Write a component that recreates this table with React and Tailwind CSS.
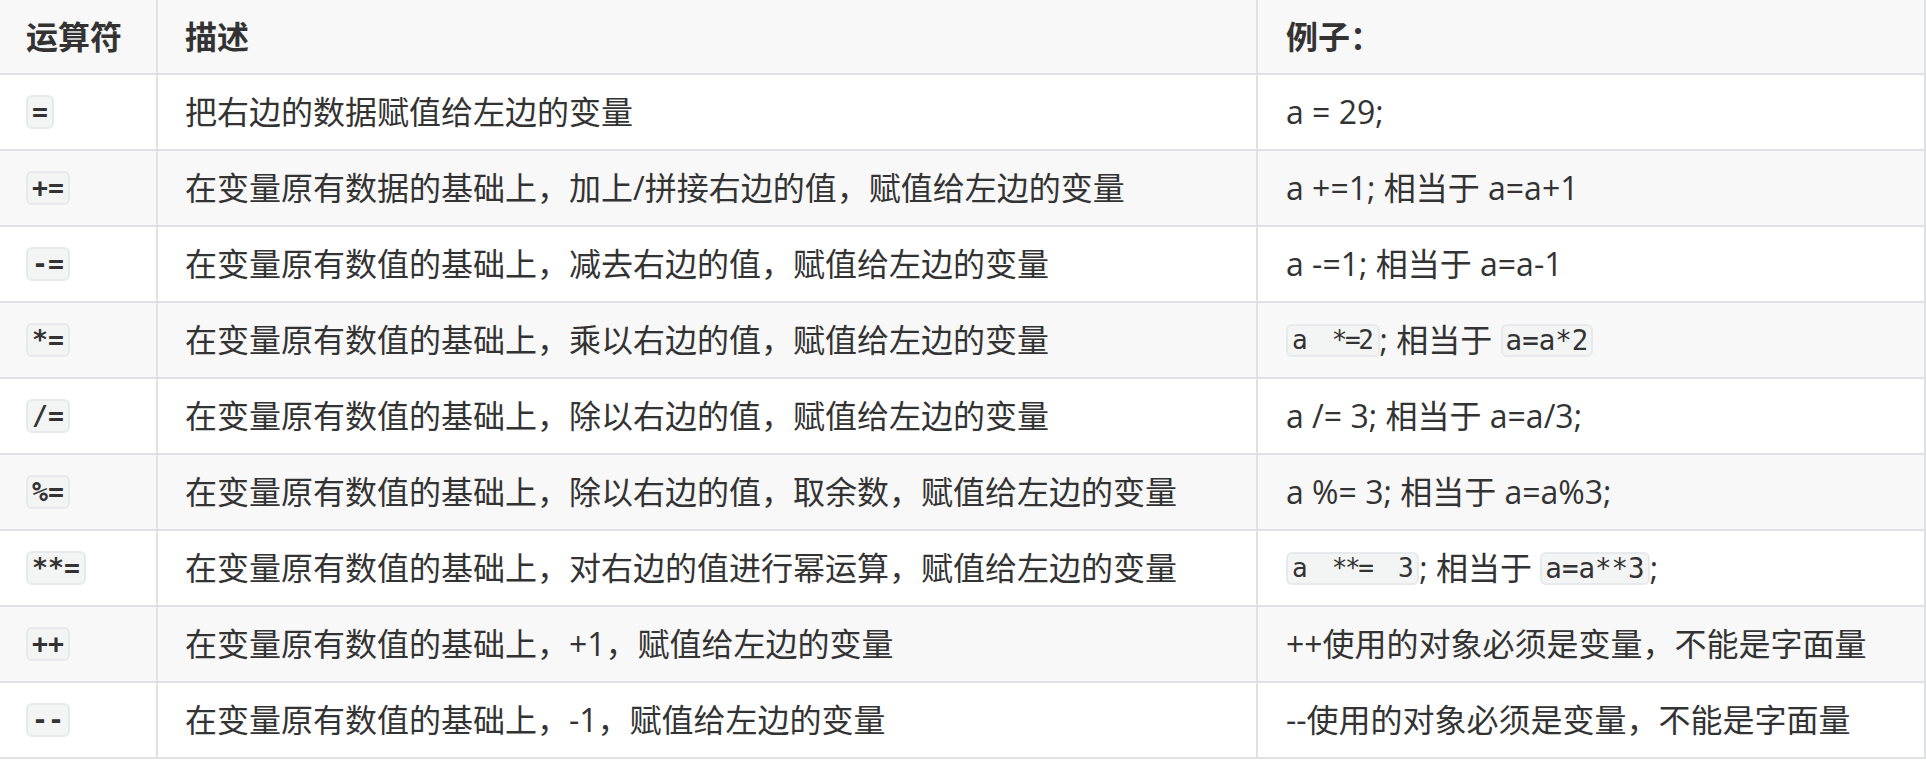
const rows = [
  { op: "=", desc: "把右边的数据赋值给左边的变量", ex: ["a = 29;"] },
  { op: "+=", desc: "在变量原有数据的基础上，加上/拼接右边的值，赋值给左边的变量", ex: ["a +=1; 相当于 a=a+1"] },
  { op: "-=", desc: "在变量原有数值的基础上，减去右边的值，赋值给左边的变量", ex: ["a -=1; 相当于 a=a-1"] },
  {
    op: "*=",
    desc: "在变量原有数值的基础上，乘以右边的值，赋值给左边的变量",
    ex: [{ code: "a  *=2" }, "; 相当于 ", { code: "a=a*2", wide: true }],
  },
  { op: "/=", desc: "在变量原有数值的基础上，除以右边的值，赋值给左边的变量", ex: ["a /= 3; 相当于 a=a/3;"] },
  { op: "%=", desc: "在变量原有数值的基础上，除以右边的值，取余数，赋值给左边的变量", ex: ["a %= 3; 相当于 a=a%3;"] },
  {
    op: "**=",
    desc: "在变量原有数值的基础上，对右边的值进行幂运算，赋值给左边的变量",
    ex: [{ code: "a  **=  3" }, "; 相当于 ", { code: "a=a**3", wide: true }, ";"],
  },
  { op: "++", desc: "在变量原有数值的基础上，+1，赋值给左边的变量", ex: ["++使用的对象必须是变量，不能是字面量"] },
  { op: "--", desc: "在变量原有数值的基础上，-1，赋值给左边的变量", ex: ["--使用的对象必须是变量，不能是字面量"] },
];

function Code({ children, wide }) {
  return (
    <code
      className={`inline-block whitespace-pre rounded-[6px] border-2 border-[#e7eaed] bg-[#f3f4f4] font-['DejaVu_Sans_Mono',monospace] leading-[29px] text-[#333] ${
        wide ? "px-[3px] text-[27.5px]" : "pl-[4px] pr-[6px] text-[26px] tracking-[-2.4px]"
      }`}
    >
      {children}
    </code>
  );
}

export default function App() {
  return (
    <div className="h-[760px] w-[1926px] overflow-hidden bg-white font-['Open_Sans','Noto_Sans_CJK_SC',sans-serif] text-[32px] text-[#333]">
      <div className="flex h-[75px] border-b-2 border-[#dfe2e5] bg-[#f8f8f8] font-bold">
        <div className="flex w-[158px] items-center border-r-2 border-[#dfe2e5] pl-[26px]">运算符</div>
        <div className="flex w-[1100px] items-center border-r-2 border-[#dfe2e5] pl-[27px]">描述</div>
        <div className="flex flex-1 items-center border-r-2 border-[#dfe2e5] pl-[28px]">例子：</div>
      </div>

      {rows.map((row, idx) => (
        <div
          key={row.op}
          className={`flex h-[76px] border-b-2 border-[#dfe2e5] ${idx % 2 === 1 ? "bg-[#f8f8f8]" : "bg-white"}`}
        >
          <div className="flex w-[158px] items-center border-r-2 border-[#dfe2e5] pl-[26px]">
            <code className="inline-block rounded-[6px] border-2 border-[#e7eaed] bg-[#f3f4f4] px-[4px] font-['DejaVu_Sans_Mono',monospace] text-[26.5px] font-bold leading-[30px]">
              {row.op}
            </code>
          </div>
          <div className="flex w-[1100px] items-center border-r-2 border-[#dfe2e5] pl-[27px] whitespace-nowrap">
            {row.desc}
          </div>
          <div className="flex flex-1 items-center border-r-2 border-[#dfe2e5] pl-[28px] whitespace-pre">
            {row.ex.map((part, i) =>
              typeof part === "string" ? (
                <span key={i}>{part}</span>
              ) : (
                <Code key={i} wide={part.wide}>
                  {part.code}
                </Code>
              )
            )}
          </div>
        </div>
      ))}
    </div>
  );
}
